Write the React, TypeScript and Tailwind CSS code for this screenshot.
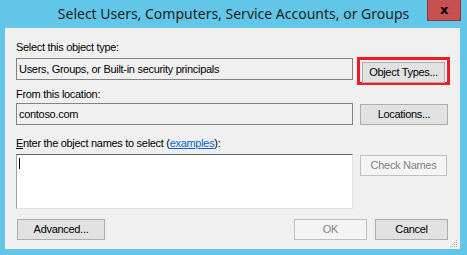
const btn =
  "flex items-center justify-center border border-[#adadad] bg-[#e1e1e1] text-[#000] h-[21px]";
const disabledBtn =
  "flex items-center justify-center border border-[#bfbfbf] bg-[#f4f4f4] text-[#838383] h-[21px]";

export default function App() {
  return (
    <div className="relative flex h-[255px] w-[467px] flex-col bg-[#62c6e9] font-['Liberation_Sans',Arial,sans-serif] text-[11px] tracking-[-0.3px] text-black">
      {/* title bar */}
      <div className="relative flex h-[28px] items-center justify-center">
        <span className="font-['Noto_Sans',sans-serif] text-[14px] tracking-normal text-[#1e1e1e] pb-[1px]">
          Select Users, Computers, Service Accounts, or Groups
        </span>
        <div className="absolute right-[6px] top-0 flex h-[21px] w-[34px] items-center justify-center border border-t-0 border-[#8b3a33] bg-[#c75050] pb-[2px]">
          <span className="font-['DejaVu_Sans',sans-serif] text-[13px] font-bold leading-none text-black">x</span>
        </div>
      </div>

      {/* body */}
      <div className="relative mb-[6px] ml-[5px] mr-[7px] flex flex-1 flex-col bg-[#f0f0f0] pl-[11px] pt-[11px]">
        <div className="h-[16px] leading-[16px]">Select this object type:</div>
        <div className="mt-[2px] flex h-[28px]">
          <div className="mt-[1px] flex h-[22px] w-[337px] items-center border border-[#828282] bg-[#f0f0f0] pl-[2px]">
            Users, Groups, or Built-in security principals
          </div>
          <div className="ml-[4px] h-[28px] w-[93px] border-[3px] border-[#ed1c24] px-[2px] pt-[2px]">
            <div className={btn + " h-[19px] w-full"}>Object Types...</div>
          </div>
        </div>

        <div className="mt-[1px] h-[16px] leading-[16px]">From this location:</div>
        <div className="mt-[1px] flex h-[22px]">
          <div className="flex h-[22px] w-[337px] items-center border border-[#828282] bg-[#f0f0f0] pl-[2px]">
            contoso.com
          </div>
          <div className={btn + " ml-[7px] mt-[1px] w-[88px] border-[#707070]"}>Locations...</div>
        </div>

        <div className="mt-[10px] h-[16px] leading-[16px]">
          <span className="underline">E</span>nter the object names to select (
          <span className="text-[#0066cc] underline">examples</span>):
        </div>
        <div className="mt-[3px] flex h-[55px]">
          <div className="h-[55px] w-[337px] border border-b-[#e3e3e3] border-l-[#a0a0a0] border-r-[#e3e3e3] border-t-[#646464] bg-white pl-[2px] pt-[3px]">
            <div className="h-[11px] w-px bg-black" />
          </div>
          <div className={disabledBtn + " ml-[7px] mt-[1px] w-[87px]"}>Check Names</div>
        </div>

        <div className="mt-[10px] flex h-[21px]">
          <div className={btn + " ml-[1px] w-[88px]"}>Advanced...</div>
          <div className={disabledBtn + " ml-[189px] w-[73px]"}>OK</div>
          <div className={btn + " ml-[8px] w-[73px] border-[#707070]"}>Cancel</div>
        </div>

        {/* resize grip */}
        <svg className="absolute bottom-[1px] right-[2px]" width="8" height="8" viewBox="0 0 8 8">
          <g fill="#b8b8b8">
            <rect x="6" y="0" width="1" height="1" />
            <rect x="4" y="2" width="1" height="1" />
            <rect x="6" y="2" width="1" height="1" />
            <rect x="2" y="4" width="1" height="1" />
            <rect x="4" y="4" width="1" height="1" />
            <rect x="6" y="4" width="1" height="1" />
            <rect x="0" y="6" width="1" height="1" />
            <rect x="2" y="6" width="1" height="1" />
            <rect x="4" y="6" width="1" height="1" />
            <rect x="6" y="6" width="1" height="1" />
          </g>
        </svg>
      </div>
    </div>
  );
}
